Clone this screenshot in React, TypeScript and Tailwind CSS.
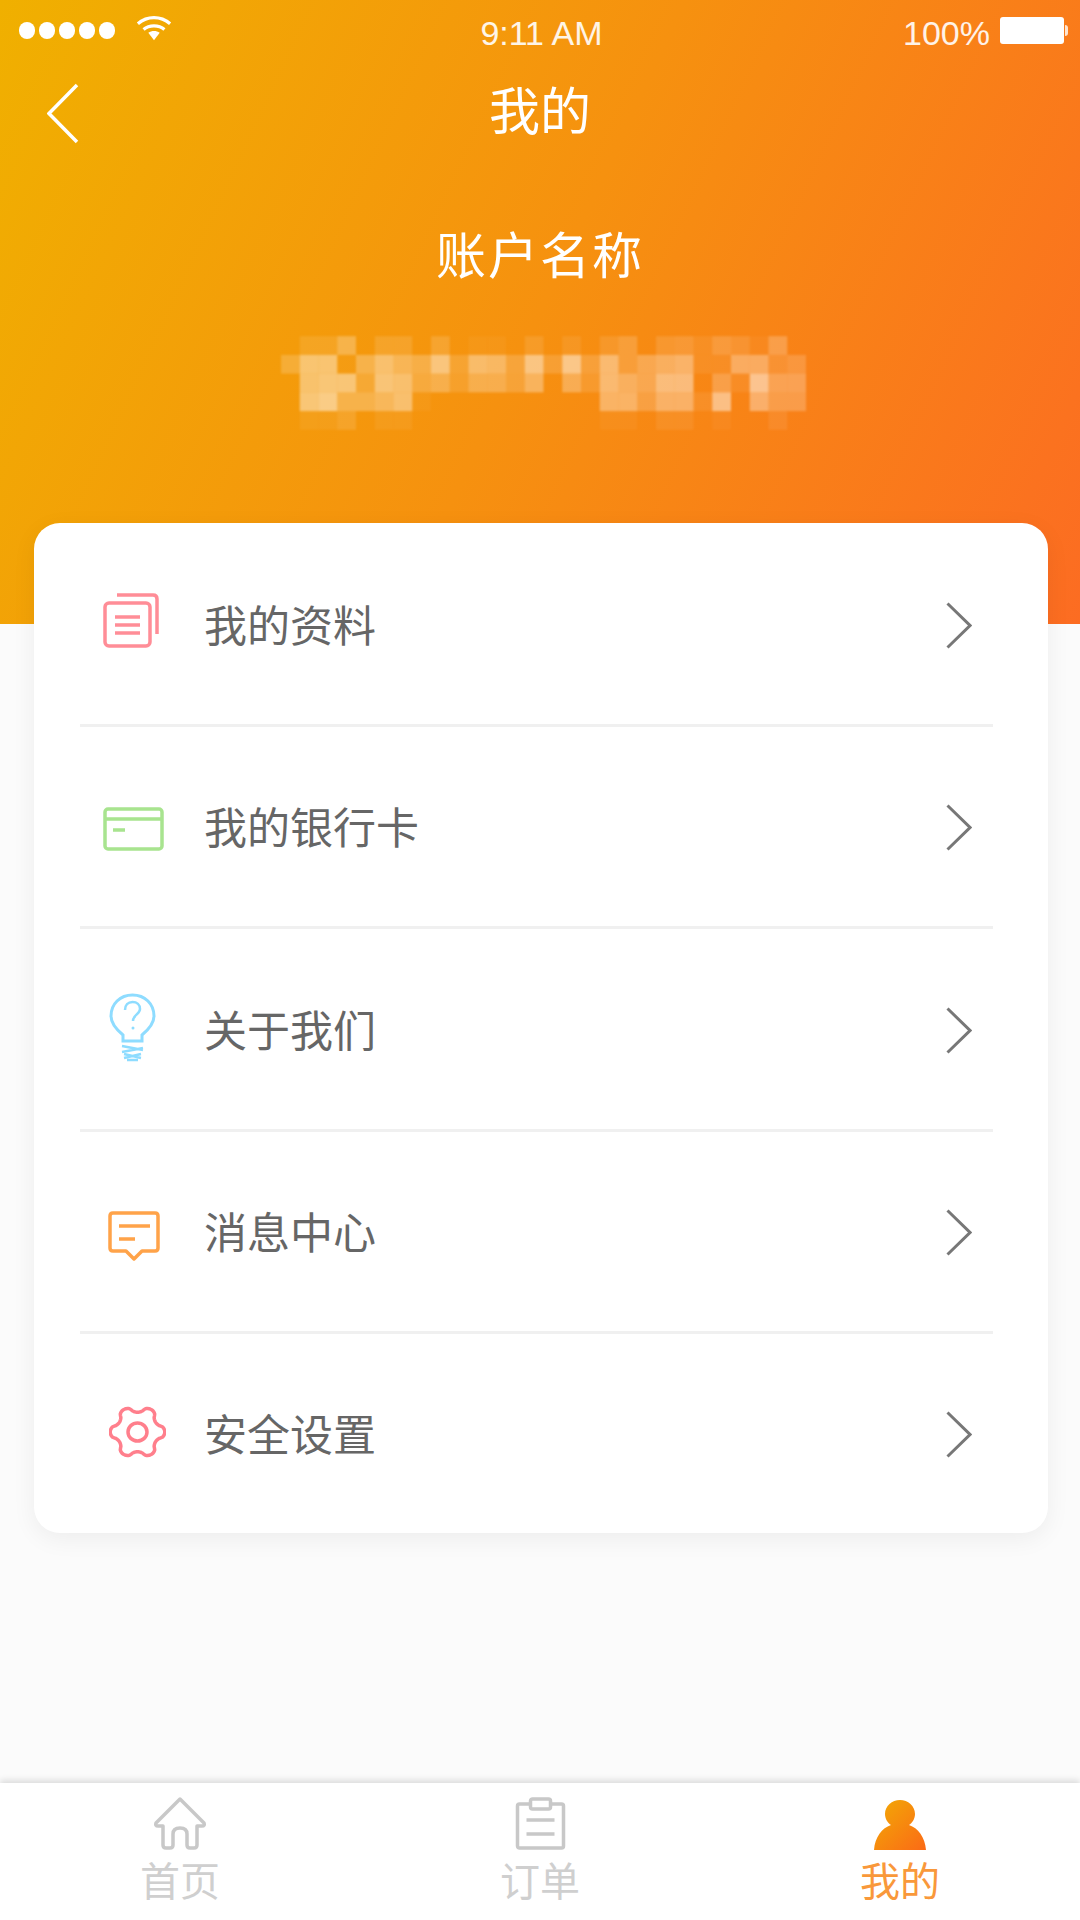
import React from "react";

const cjk = { fontFamily: '"Noto Sans CJK SC", "Liberation Sans", sans-serif' };

const mosaic: number[][] = [
  [0,.1,.1,.26,0,.12,.12,0,.14,0,.04,.04,0,.1,0,.08,0,.1,.17,0,.12,.14,.07,.17,.12,.04,.22,0],
  [.18,.42,.42,.03,.26,.4,.3,.24,.46,.15,.38,.35,.18,.48,.15,.5,.17,.4,.17,.26,.32,.36,.07,.07,.32,.32,.12,.17],
  [0,.4,.44,.44,.17,.44,.4,.2,.26,.12,.26,.26,.17,.32,0,.28,.12,.4,.32,.26,.44,.44,0,.22,.07,.52,.26,.26],
  [0,.44,.5,.26,.26,.32,.4,.04,0,0,0,0,0,0,0,0,0,.35,.35,.2,.35,.35,.08,.48,0,.36,.22,.22],
  [0,.06,.06,.12,0,.06,.06,0,0,0,0,0,0,0,0,0,0,.04,.04,0,.07,.07,0,.04,0,0,.08,0],
];

const gearPath = (() => {
  const pts: string[] = [];
  for (let i = 0; i < 144; i++) {
    const t = (i / 144) * Math.PI * 2;
    const w = Math.cos(6 * t);
    const s = Math.sign(w) * Math.pow(Math.abs(w), 0.6);
    const r = 0.88 + 0.12 * s;
    pts.push(`${(28.5 + 26.5 * r * 1.03 * Math.cos(t)).toFixed(2)} ${(27 + 26 * r * Math.sin(t)).toFixed(2)}`);
  }
  return `M${pts.join("L")}Z`;
})();

const Chevron = () => (
  <svg width="26" height="47" viewBox="0 0 26 47" fill="none" className="shrink-0">
    <path d="M1.5 1.5L24 23.5L1.5 45.5" stroke="#777" strokeWidth="3" />
  </svg>
);

const DocIcon = () => (
  <svg width="56" height="55" viewBox="0 0 56 55" fill="none" stroke="#ff8d97" strokeWidth="3.5" className="ml-[23px] -mt-[8px]">
    <rect x="2" y="10" width="45" height="43" rx="4" />
    <path d="M14 2H50Q54 2 54 6V41" />
    <path d="M12 24H37M12 32H37M12 40H37" />
  </svg>
);

const CardIcon = () => (
  <svg width="61" height="44" viewBox="0 0 61 44" fill="none" stroke="#a8e48f" strokeWidth="3.5" className="ml-[23px] mt-[4px]">
    <rect x="2" y="2" width="57" height="40" rx="3" />
    <path d="M3 12H58M10 23H22" />
  </svg>
);

const BulbIcon = () => (
  <svg width="47" height="69" viewBox="0 0 47 69" fill="none" stroke="#8edcff" strokeWidth="3" className="ml-[29px] -mt-[4px]">
    <path d="M14 48V42C8 37 2 31 2 23C2 11 11 2 23.5 2C36 2 45 11 45 23C45 31 39 37 33 42V48Z" />
    <path d="M16 17C16 12 19 9 23.5 9C28 9 31 12 31 16C31 21 24 22 24 28" strokeWidth="2.5" />
    <circle cx="24" cy="35" r="1.5" fill="#8edcff" stroke="none" />
    <path d="M13 53L34 57M13 59L34 55M15 65L32 61M15 61L32 65M18 67H29" strokeWidth="2.5" />
  </svg>
);

const MessageIcon = () => (
  <svg width="52" height="51" viewBox="0 0 52 51" fill="none" stroke="#ffa349" strokeWidth="3.5" className="ml-[28px] mt-[10px]">
    <path d="M5 2H47Q50 2 50 5V37Q50 40 47 40H34L26 48L18 40H5Q2 40 2 37V5Q2 2 5 2Z" strokeLinejoin="round" />
    <path d="M11 15H42M11 28H27" />
  </svg>
);

const GearIcon = () => (
  <svg width="57" height="54" viewBox="0 0 57 54" fill="none" stroke="#ff7f8c" strokeWidth="3.5" className="ml-[29px] -mt-[2px]">
    <path d={gearPath} strokeLinejoin="round" />
    <ellipse cx="28.5" cy="27" rx="9.5" ry="9" />
  </svg>
);

const rows = [
  { icon: <DocIcon />, label: "我的资料" },
  { icon: <CardIcon />, label: "我的银行卡" },
  { icon: <BulbIcon />, label: "关于我们" },
  { icon: <MessageIcon />, label: "消息中心" },
  { icon: <GearIcon />, label: "安全设置" },
];

export default function App() {
  return (
    <div className="w-[1080px] h-[1920px] flex flex-col bg-[#fbfbfb] overflow-hidden" style={cjk}>
      <header className="h-[624px] shrink-0 flex flex-col text-white bg-[linear-gradient(115deg,#f0b000_0%,#f6910f_50%,#fc6c22_100%)]">
        <div
          className="h-[66px] grid grid-cols-[1fr_auto_1fr] items-center text-[34px] text-white/90 pl-[19px] pr-[12px]"
          style={{ fontFamily: '"Liberation Sans", sans-serif' }}
        >
          <div className="flex items-center">
            <div className="flex gap-[4px] -mt-[6px]">
              <span className="w-[16px] h-[17px] rounded-full bg-white" />
              <span className="w-[16px] h-[17px] rounded-full bg-white" />
              <span className="w-[16px] h-[17px] rounded-full bg-white" />
              <span className="w-[16px] h-[17px] rounded-full bg-white" />
              <span className="w-[16px] h-[17px] rounded-full bg-white" />
            </div>
            <svg width="36" height="28" viewBox="0 0 38 28" fill="none" stroke="#fff" strokeWidth="3.5" className="ml-[21px] -mt-[10px]">
              <path d="M2 9.5C12 1 26 1 36 9.5M8 15.5C14 10.5 24 10.5 30 15.5" />
              <path d="M13 19C16.5 16.5 21.5 16.5 25 19L19 27Z" fill="#fff" stroke="none" />
            </svg>
          </div>
          <div className="font-light -ml-[4px]">9:11 AM</div>
          <div className="flex items-center justify-end gap-[10px]">
            <span>100%</span>
            <div className="flex items-center -mt-[6px]">
              <span className="w-[64px] h-[27px] rounded-[3px] bg-white" />
              <span className="w-[3px] h-[11px] bg-white/80 ml-[1px] rounded-r-sm" />
            </div>
          </div>
        </div>

        <div className="h-[94px] grid grid-cols-[1fr_auto_1fr] items-center pl-[47px]">
          <svg width="32" height="61" viewBox="0 0 32 61" fill="none" stroke="#fff" strokeWidth="3.5">
            <path d="M30 2L2 30.5L30 59" />
          </svg>
          <h1 className="text-[51px] leading-[60px] font-normal -ml-[47px] -mt-[10px]">我的</h1>
          <div />
        </div>

        <div className="mt-[62px] text-center text-[50px] leading-[60px] tracking-[2px]">账户名称</div>

        <svg width="525" height="94" viewBox="0 0 532 95" className="mt-[54px] ml-[281px] blur-[0.8px]">
          {mosaic.flatMap((row, y) =>
            row.map((o, x) =>
              o > 0 ? <rect key={`${x}-${y}`} x={x * 19} y={y * 19} width="19" height="19" fill="#fff" opacity={o} /> : null
            )
          )}
        </svg>
      </header>

      <main className="ml-[34px] w-[1014px] -mt-[101px] h-[1010px] shrink-0 rounded-[26px] bg-white shadow-[0_6px_24px_rgba(0,0,0,0.06)] pt-[2px] pl-[46px] pr-[55px] flex flex-col relative">
        {rows.map((r, i) => (
          <div
            key={r.label}
            className={`flex-1 flex items-center border-[#f0f0f0] ${i < rows.length - 1 ? "border-b-[3px]" : ""}`}
          >
            <div className="w-[124px] shrink-0 flex items-center">{r.icon}</div>
            <span className="text-[43px] leading-[56px] text-[#666] flex-1 -mt-[3px]">{r.label}</span>
            <div className="mr-[21px] flex items-center mt-[2px]">
              <Chevron />
            </div>
          </div>
        ))}
      </main>

      <nav className="mt-auto h-[137px] shrink-0 bg-white shadow-[0_-3px_6px_rgba(0,0,0,0.12)] grid grid-cols-[360px_360px_360px] relative">
        <div className="flex flex-col items-center pt-[14px]">
          <svg width="52" height="53" viewBox="0 0 52 53" fill="none" stroke="#c8c8c8" strokeWidth="3.5" strokeLinejoin="round">
            <path d="M26 2L50 26Q51 29 48 29H43V48Q43 51 40 51H36Q33 51 33 48V37Q33 31 26 31Q19 31 19 37V48Q19 51 16 51H12Q9 51 9 48V29H4Q1 29 2 26Z" />
          </svg>
          <span className="text-[40px] leading-[48px] text-[#cfcfcf] mt-[5px]">首页</span>
        </div>
        <div className="flex flex-col items-center pt-[14px]">
          <svg width="51" height="53" viewBox="0 0 50 53" fill="none" stroke="#c8c8c8" strokeWidth="3.5">
            <rect x="2" y="7" width="46" height="44" rx="2" />
            <rect x="15" y="2" width="20" height="10" rx="2" fill="#fff" />
            <path d="M11 23H39M11 37H39" />
          </svg>
          <span className="text-[40px] leading-[48px] text-[#cfcfcf] mt-[5px]">订单</span>
        </div>
        <div className="flex flex-col items-center pt-[14px]">
          <svg width="52" height="53" viewBox="0 0 52 53">
            <defs>
              <linearGradient id="personGrad" x1="0" y1="0" x2="1" y2="1">
                <stop offset="0" stopColor="#f2ab05" />
                <stop offset="1" stopColor="#fb6a16" />
              </linearGradient>
            </defs>
            <path
              fill="url(#personGrad)"
              d="M26 3C34 3 41 9 41 17C41 22 38 26 35 28C44 31 51 40 52 53H0C1 40 8 31 17 28C14 26 11 22 11 17C11 9 18 3 26 3Z"
            />
          </svg>
          <span className="text-[40px] leading-[48px] text-[#f9983a] mt-[5px]">我的</span>
        </div>
      </nav>
    </div>
  );
}
